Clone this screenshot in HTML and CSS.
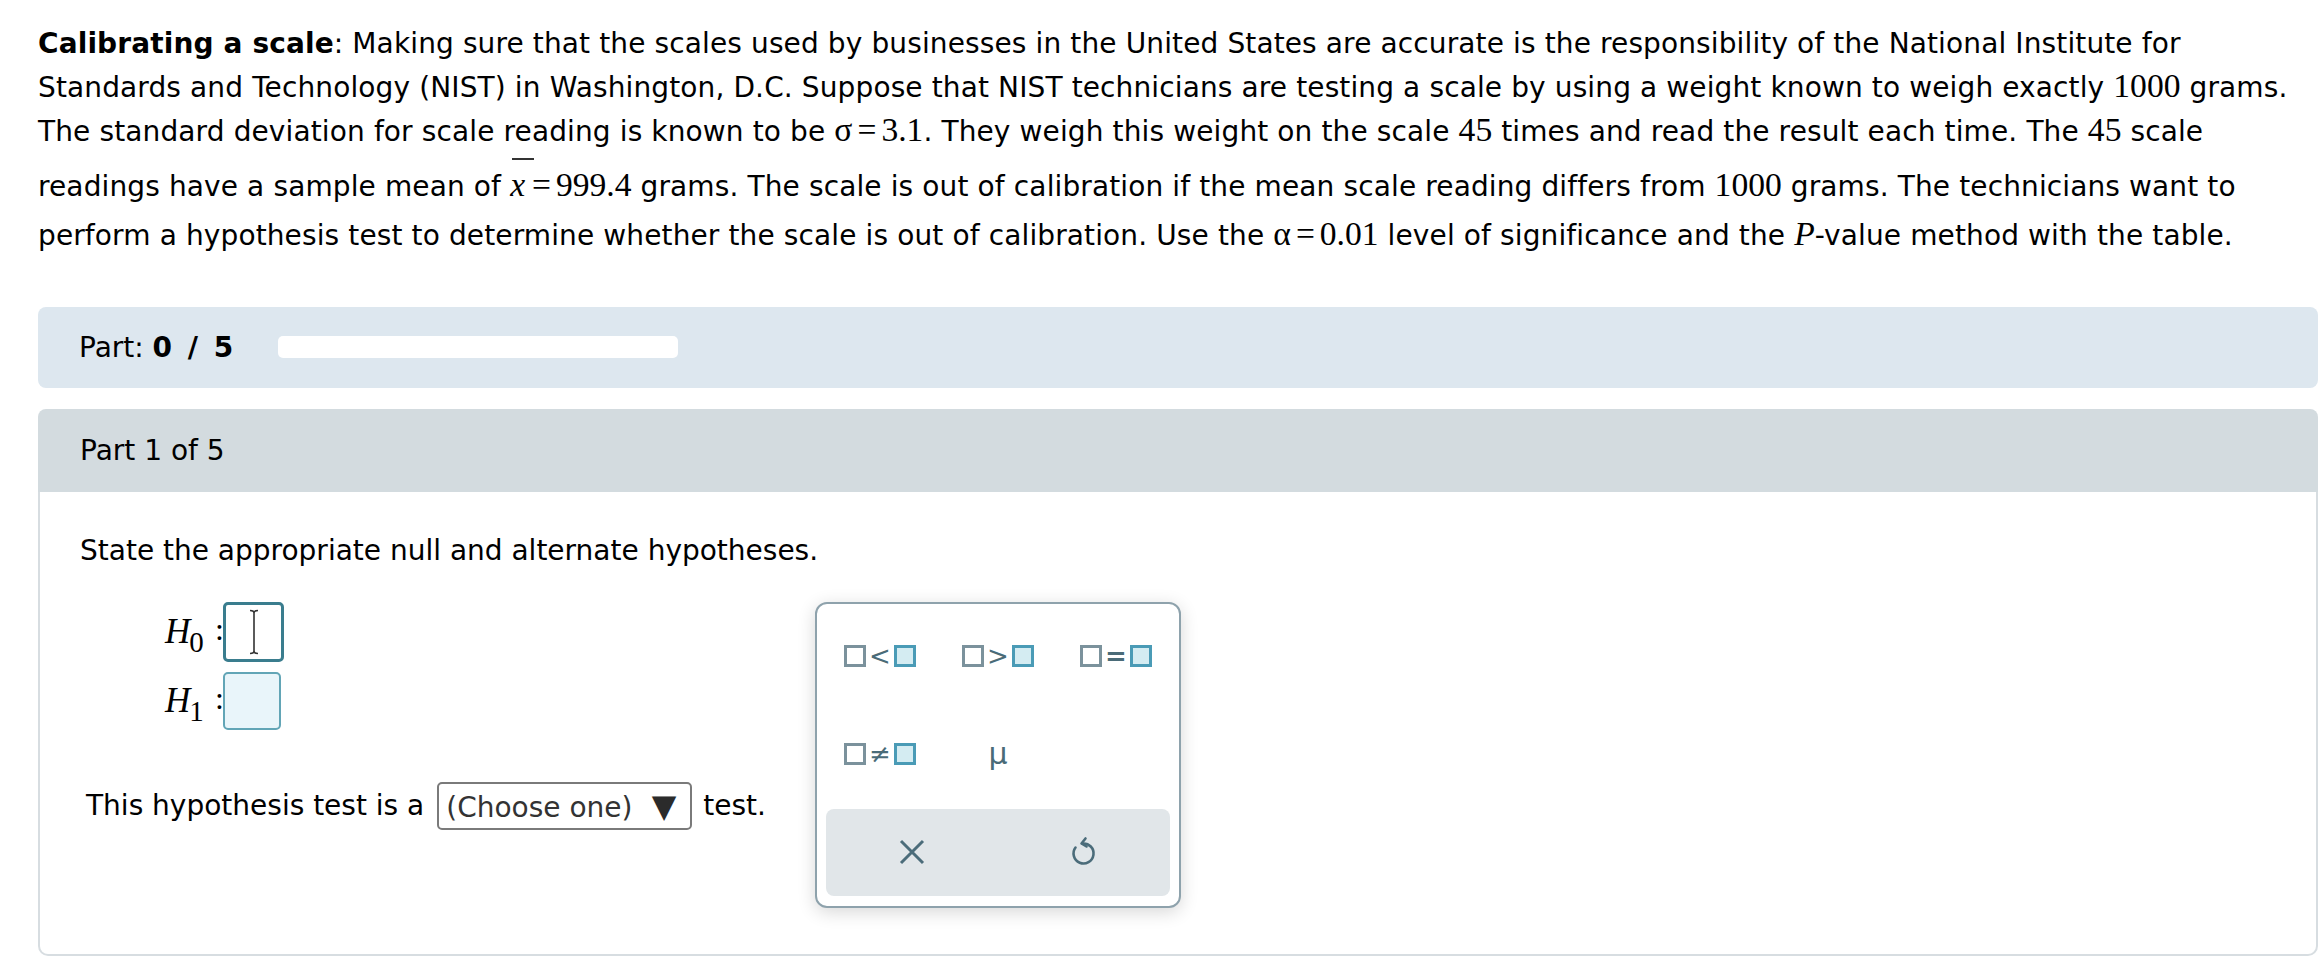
FILE: index.html
```html
<!DOCTYPE html>
<html lang="en">
<head>
<meta charset="utf-8">
<title>Calibrating a scale</title>
<link rel="stylesheet" href="styles.css">
</head>
<body>
<div class="page">
  <p class="problem"><b>Calibrating a scale</b>: Making sure that the scales used by businesses in the United States are accurate is the responsibility of the National Institute for Standards and Technology (NIST) in Washington, D.C. Suppose that NIST technicians are testing a scale by using a weight known to weigh exactly <span class="m">1000</span> grams. The standard deviation for scale reading is known to be <span class="m">σ<span class="op">=</span>3.1</span>. They weigh this weight on the scale <span class="m">45</span> times and read the result each time. The <span class="m">45</span> scale readings have a sample mean of <span class="m"><span class="xbar">x</span><span class="op">=</span>999.4</span> grams. The scale is out of calibration if the mean scale reading differs from <span class="m">1000</span> grams. The technicians want to perform a hypothesis test to determine whether the scale is out of calibration. Use the <span class="m">α<span class="op">=</span>0.01</span> level of significance and the <span class="m mi">P</span>-value method with the table.</p>

  <div class="partbar">
    <span class="partlabel">Part: <b class="count">0 / 5</b></span>
    <div class="track"></div>
  </div>

  <div class="card">
    <div class="card-head">Part 1 of 5</div>
    <div class="card-body">
      <p class="prompt">State the appropriate null and alternate hypotheses.</p>
      <div class="hyps">
        <div class="hrow r0">
          <span class="hl"><span class="hi">H</span><span class="hs">0</span></span><span class="colon">:</span>
          <span class="box focus">
            <svg class="ibeam" width="12" height="46" viewBox="0 0 12 46"><path d="M2 1.5 Q6 1.5 6 4 Q6 1.5 10 1.5 M6 4 V42 M2 44.5 Q6 44.5 6 42 Q6 44.5 10 44.5" fill="none" stroke="#333" stroke-width="1.6"/></svg>
          </span>
        </div>
        <div class="hrow r1">
          <span class="hl"><span class="hi">H</span><span class="hs">1</span></span><span class="colon">:</span>
          <span class="box"></span>
        </div>
      </div>
      <div class="testline">
        <span>This hypothesis test is a</span>
        <span class="select"><span class="seltext">(Choose one)</span><span class="arrow">▼</span></span>
        <span class="after">test.</span>
      </div>

      <div class="palette">
        <div class="keys">
          <div class="key"><span class="sq"></span><span class="opk">&lt;</span><span class="sq b"></span></div>
          <div class="key"><span class="sq"></span><span class="opk">&gt;</span><span class="sq b"></span></div>
          <div class="key"><span class="sq"></span><span class="opk eqk">=</span><span class="sq b"></span></div>
          <div class="key"><span class="sq"></span><span class="opk">≠</span><span class="sq b"></span></div>
          <div class="key mu">μ</div>
        </div>
        <div class="actions">
          <div class="act">
            <svg width="26" height="26" viewBox="0 0 26 26"><path d="M2 2 L24 24 M24 2 L2 24" stroke="#4b6c7a" stroke-width="3" fill="none"/></svg>
          </div>
          <div class="act">
            <svg width="28" height="32" viewBox="0 0 28 32"><path d="M12.5 7.5 A10 10 0 1 1 5.5 11.5" stroke="#4b6c7a" stroke-width="2.6" fill="none" stroke-linecap="round"/><path d="M15.5 2.5 L11.5 7.5 L16.5 10.5" stroke="#4b6c7a" stroke-width="2.6" fill="none" stroke-linecap="round" stroke-linejoin="round"/></svg>
          </div>
        </div>
      </div>
    </div>
  </div>
</div>
</body>
</html>
```

FILE: styles.css
```css
* { box-sizing: border-box; }

body {
  margin: 0;
  background: #ffffff;
  color: #000000;
  font-family: "DejaVu Sans", Verdana, sans-serif;
  font-size: 28px;
}

.page {
  padding: 22px 4px 0 38px;
}

.problem {
  margin: 0;
  padding-right: 14px;
  line-height: 44px;
  letter-spacing: 0.12px;
}

.m {
  font-family: "Liberation Serif", "Times New Roman", serif;
  font-size: 1.2em;
  line-height: 1;
  letter-spacing: 0;
}

.mi { font-style: italic; }

.op { margin: 0 5px; }

.xbar {
  display: inline-block;
  position: relative;
  font-style: italic;
  padding-top: 14px;
  padding-bottom: 12px;
  padding-right: 2px;
  line-height: 1;
}

.xbar::before {
  content: "";
  position: absolute;
  top: 4px;
  left: 2px;
  width: 22px;
  height: 2px;
  background: #333;
}

.partbar {
  margin-top: 49px;
  height: 81px;
  display: flex;
  align-items: center;
  padding-left: 41px;
  background: #dde7ef;
  border-radius: 8px;
}

.count { letter-spacing: 3px; }

.track {
  margin-left: 42px;
  width: 400px;
  height: 22px;
  background: #ffffff;
  border-radius: 5px;
}

.card {
  margin-top: 21px;
}

.card-head {
  height: 83px;
  display: flex;
  align-items: center;
  padding-left: 42px;
  background: #d3dbdf;
  border-radius: 8px 8px 0 0;
}

.card-body {
  position: relative;
  height: 464px;
  border: 2px solid #d7dde1;
  border-top: none;
  border-radius: 0 0 10px 10px;
  padding: 37px 0 0 40px;
}

.prompt {
  margin: 0;
  line-height: 44px;
}

.hyps {
  margin-top: 29px;
  margin-left: 85px;
  display: flex;
  flex-direction: column;
  gap: 10px;
}

.hrow {
  display: flex;
  align-items: center;
}

.hrow.r0 { height: 60px; }
.hrow.r1 { height: 58px; }

.hl {
  width: 50px;
  display: inline-flex;
  align-items: baseline;
  font-family: "Liberation Serif", "Times New Roman", serif;
}

.hi {
  font-style: italic;
  font-size: 35px;
}

.hs {
  font-size: 29px;
  position: relative;
  top: 9px;
  margin-left: -1px;
}

.colon {
  width: 8px;
  font-family: "Liberation Serif", "Times New Roman", serif;
  font-size: 32px;
  position: relative;
  top: -2px;
}

.box {
  display: flex;
  align-items: center;
  justify-content: center;
  width: 58px;
  height: 58px;
  border: 2px solid #62a5b6;
  background: #e9f5fa;
  border-radius: 5px;
}

.box.focus {
  width: 61px;
  height: 60px;
  border: 3px solid #3a7d8e;
  background: #ffffff;
}

.testline {
  margin-top: 52px;
  margin-left: 6px;
  display: flex;
  align-items: center;
  height: 48px;
}

.select {
  margin-left: 13px;
  width: 255px;
  height: 48px;
  display: flex;
  align-items: center;
  justify-content: space-between;
  padding: 4px 14px 0 7px;
  border: 2px solid #7a7a7a;
  border-radius: 5px;
  color: #333333;
}

.arrow {
  font-size: 32px;
  line-height: 1;
  color: #2b2b2b;
  position: relative;
  top: -2px;
}

.after { margin-left: 11px; }

.palette {
  position: absolute;
  left: 775px;
  top: 110px;
  width: 366px;
  height: 306px;
  background: #ffffff;
  border: 2px solid #8ea2ac;
  border-radius: 12px;
  box-shadow: 0 4px 18px rgba(0, 0, 0, 0.16);
  padding: 3px 4px 0 4px;
}

.keys {
  display: grid;
  grid-template-columns: repeat(3, 118px);
  grid-auto-rows: 98px;
}

.key {
  display: flex;
  align-items: center;
  justify-content: center;
  gap: 3px;
  color: #4a6b78;
}

.sq {
  width: 22px;
  height: 22px;
  border: 3px solid #7b929c;
  background: #ffffff;
}

.sq.b {
  border-color: #4a9bb6;
  background: #d4ecf2;
}

.opk {
  font-family: "DejaVu Sans", sans-serif;
  font-size: 26px;
  line-height: 22px;
  color: #4a6b78;
}

.eqk { font-weight: bold; }

.mu {
  font-family: "DejaVu Sans", sans-serif;
  font-size: 30px;
}

.actions {
  margin: 6px 5px 0 5px;
  height: 87px;
  display: flex;
  background: #e1e6e9;
  border-radius: 8px;
}

.act {
  flex: 1;
  display: flex;
  align-items: center;
  justify-content: center;
}
```
